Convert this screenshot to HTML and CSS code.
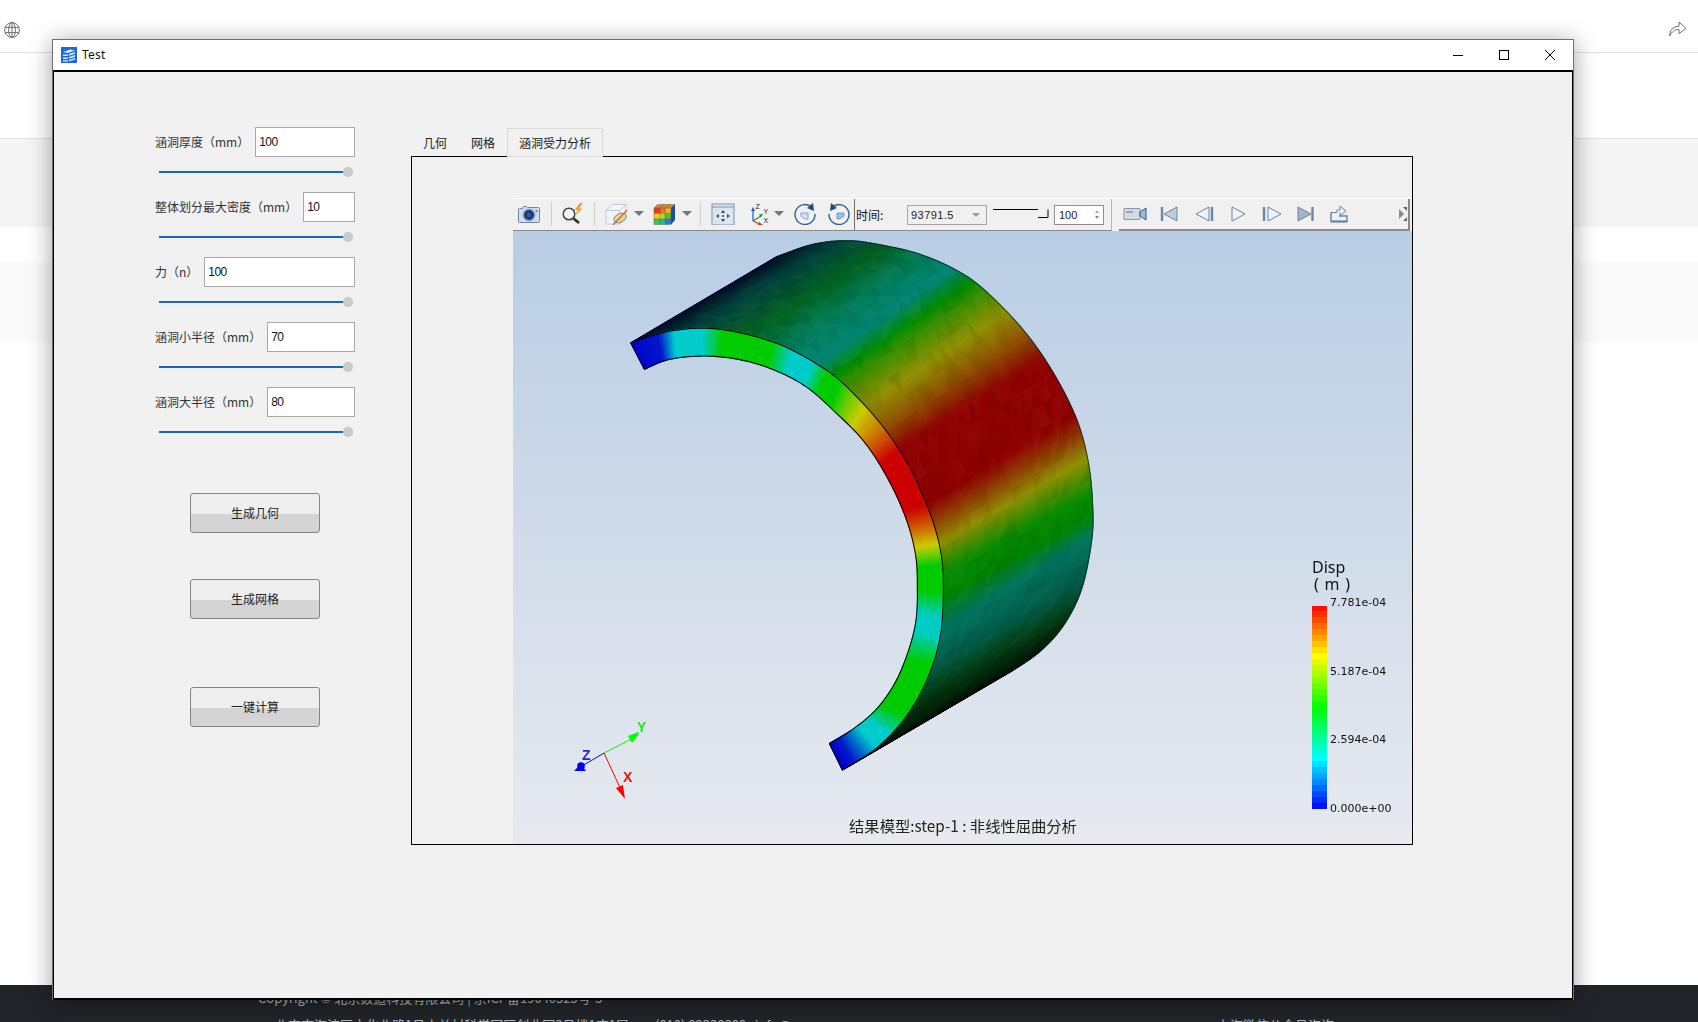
FILE: index.html
```html
<!DOCTYPE html>
<html lang="zh">
<head>
<meta charset="utf-8">
<title>Test</title>
<link rel="stylesheet" href="styles.css">
</head>
<body>
<div class="page">
  <header class="site-head">
    <svg class="globe" viewBox="0 0 16 16" width="16" height="16"><g fill="none" stroke="#6d6d6d" stroke-width="1"><circle cx="8" cy="8" r="7.4"/><ellipse cx="8" cy="8" rx="3.4" ry="7.4"/><path d="M8 .6v14.8M1.2 5.4h13.600M1.2 10.600h13.600"/></g></svg>
    <svg class="share" viewBox="0 0 18 18" width="18" height="18"><path d="M.8 17C.6 11 4 7.400 10 7.200V3l7 6.400-7 5.200v-4.200C6 10.200 2.800 12.600.8 17Z" fill="none" stroke="#6f6f6f" stroke-width="1"/></svg>
  </header>
  <div class="band-white"></div>
  <div class="band-grey"></div>
  <div class="band-gap"></div>
  <div class="band-light"></div>
  <div class="band-fill"></div>
  <footer class="site-foot">
    <p class="foot-line">Copyright © 北京数造科技有限公司 | 京ICP备19040325号-5</p>
    <p class="foot-line foot-row">
      <span class="addr"><i class="dot"></i>北京市海淀区文化北路1号中关村科学园区创业园3号楼1座1层</span>
      <span class="tel"><i class="dot"></i>(010) 82238888 &nbsp; info@cae.com</span>
      <span class="qr">上海微信公众号咨询</span>
    </p>
  </footer>
</div>

<section class="window">
  <div class="titlebar">
    <svg class="app-icon" viewBox="0 0 16 16" width="16" height="16"><rect width="16" height="16" fill="#1769e0"/><path d="M2 5 9 2.500 14 3.500 7 6ZM2 7.500h5v1.500H2ZM8 7l6-2v1.800L8 8.800ZM2 10.500h5V12H2ZM8 10l6-2v1.800l-6 2ZM2 13.200h5v1.200H2ZM8 13l6-2v1.500l-6 2Z" fill="#dfeafc"/></svg>
    <span class="win-title">Test</span>
    <div class="win-controls">
      <span class="win-btn"><svg viewBox="0 0 12 12" width="12" height="12"><path d="M1 6.500h10" stroke="#000"/></svg></span>
      <span class="win-btn"><svg viewBox="0 0 12 12" width="12" height="12"><rect x="1.500" y="1.500" width="9" height="9" fill="none" stroke="#000"/></svg></span>
      <span class="win-btn"><svg viewBox="0 0 12 12" width="12" height="12"><path d="M1 1l10 10M11 1 1 11" stroke="#000" fill="none"/></svg></span>
    </div>
  </div>
  <div class="client">
    <form class="params">
      <div class="param"><label class="param-label">涵洞厚度（mm）</label><div class="field">100</div></div>
      <div class="slider"><span class="track"></span><span class="thumb"></span></div>
      <div class="param"><label class="param-label">整体划分最大密度（mm）</label><div class="field">10</div></div>
      <div class="slider"><span class="track"></span><span class="thumb"></span></div>
      <div class="param"><label class="param-label">力（n）</label><div class="field">100</div></div>
      <div class="slider"><span class="track"></span><span class="thumb"></span></div>
      <div class="param"><label class="param-label">涵洞小半径（mm）</label><div class="field">70</div></div>
      <div class="slider"><span class="track"></span><span class="thumb"></span></div>
      <div class="param"><label class="param-label">涵洞大半径（mm）</label><div class="field">80</div></div>
      <div class="slider"><span class="track"></span><span class="thumb"></span></div>
      <button type="button" class="action action-first">生成几何</button>
      <button type="button" class="action">生成网格</button>
      <button type="button" class="action action-last">一键计算</button>
    </form>

    <div class="workspace">
      <nav class="tabs">
        <span class="tab">几何</span>
        <span class="tab">网格</span>
        <span class="tab tab-active">涵洞受力分析</span>
      </nav>
      <div class="tab-panel">
        <div class="toolbar">
          <div class="tool-left">
            <svg class="ico ml4" viewBox="0 0 24 22" width="24" height="22"><path d="M2.500 5.500h3l1-2h3l1 1h11a1 1 0 0 1 1 1v13a1 1 0 0 1-1 1h-19a1 1 0 0 1-1-1V6.500a1 1 0 0 1 1-1Z" fill="#cfdcec" stroke="#6f88aa"/><circle cx="12" cy="12" r="6.500" fill="#8fa8c8"/><circle cx="12" cy="12" r="5" fill="#1c3a78"/><circle cx="12" cy="12" r="2.200" fill="#2f5aa8"/><circle cx="19.500" cy="8" r="1" fill="#5d7698"/></svg>
            <i class="sep ml10"></i>
            <svg class="ico ml9" viewBox="0 0 24 22" width="24" height="22"><circle cx="8" cy="11" r="5.800" fill="#f2f4f7" stroke="#444" stroke-width="1.500"/><path d="M12.500 15.500l5.500 4.500" stroke="#333" stroke-width="2.800"/><path d="M19 0l-5.500 7h3.500l-3.500 6 8-7.500h-3.500l4-5.500Z" fill="#ee9f2c"/></svg>
            <i class="sep ml9"></i>
            <svg class="ico ml10" viewBox="0 0 24 22" width="24" height="22"><path d="M1 7.500 7 1.500h14v13l-6 6.500H1Z" fill="#f3f5f8" stroke="#c3cbd8"/><path d="M1 7.500h14v13.500M15 7.500l6-6" fill="none" stroke="#c3cbd8"/><ellipse cx="15" cy="15" rx="6.500" ry="4.200" fill="#efd98a" stroke="#7e8ea5" transform="rotate(-25 15 15)"/><path d="M8 22 22 7" stroke="#e0502e" stroke-width="1.200"/></svg>
            <i class="caret ml5"></i>
            <svg class="ico ml9" viewBox="0 0 24 22" width="24" height="22"><path d="M1 5h6v5.500H1Z" fill="#e33a20"/><path d="M7 5h5v5.500H7Z" fill="#ef7020"/><path d="M12 5h6v5.500h-6Z" fill="#e8b020"/><path d="M1 10.500h6V16H1Z" fill="#f0c820"/><path d="M7 10.500h5V16H7Z" fill="#c0d820"/><path d="M12 10.500h6V16h-6Z" fill="#50c040"/><path d="M1 16h6v5.500H1Z" fill="#40c060"/><path d="M7 16h5v5.500H7Z" fill="#20b8b0"/><path d="M12 16h6v5.500h-6Z" fill="#2a80d0"/><path d="M1 5l4-4h17l-4 4Z" fill="#c58a50"/><path d="M18 5l4-4v16l-4 4.500Z" fill="#1a4ea8"/><path d="M1 5h17v16.500H1ZM7 5v16.500M12 5v16.500M1 10.500h17M1 16h17M5 1 1 5M11 1 7 5M17 1l-5 4M18 5l4-4" fill="none" stroke="#55604a" stroke-width=".45"/></svg>
            <i class="caret ml5"></i>
            <i class="sep ml8"></i>
            <svg class="ico ml10" viewBox="0 0 24 22" width="24" height="22"><rect x="1" y="1" width="22" height="21" fill="#dde4ee" stroke="#7f93b0"/><path d="M1 4h22" stroke="#7f93b0"/><path d="M12 7l-2 3h4ZM12 19l-2-3h4ZM5 13l3-2v4ZM19 13l-3-2v4Z" fill="#304a70"/><circle cx="12" cy="13" r="1" fill="#304a70"/></svg>
            <svg class="ico ml13" viewBox="0 0 24 22" width="24" height="22"><path d="M5 18V7" stroke="#2858b8" stroke-width="1.200"/><path d="M5 4 3 8h4Z" fill="#2858b8"/><path d="M5 18l8-5" stroke="#209040" stroke-width="1.200"/><path d="M15 11l-4 .5 2 3Z" fill="#209040"/><path d="M5 18l7 3" stroke="#e03020" stroke-width="1.200"/><path d="M15 22l-4-3-1 3Z" fill="#e03020"/><text x="7.500" y="6" class="axis-mini">Z</text><text x="15.500" y="11" class="axis-mini">Y</text><text x="15.500" y="20" class="axis-mini">X</text></svg>
            <i class="caret ml2"></i>
            <svg class="ico ml9" viewBox="0 0 24 22" width="24" height="22"><path d="M18 3.500A10 10 0 1 0 22 11" fill="none" stroke="#2f6090" stroke-width="1.400"/><path d="M20 0l1 8-7-3Z" fill="#1e4a7e"/><path d="M8 10h7v6h-3l-4-3Z" fill="#cfe2f6" stroke="#5b8ab8" stroke-width=".7"/></svg>
            <svg class="ico ml10" viewBox="0 0 24 22" width="24" height="22"><path d="M6 3.500A10 10 0 1 1 2 11" fill="none" stroke="#2f6090" stroke-width="1.400"/><path d="M4 0 3 8l7-3Z" fill="#1e4a7e"/><path d="M10 10h7v3l-4 3h-3Z" fill="#8fc2ee" stroke="#5b8ab8" stroke-width=".7"/></svg>
          </div>
          <div class="tool-time">
            <span class="time-label">时间:</span>
            <div class="combo"><span>93791.5</span><i class="caret caret-sm"></i></div>
            <svg class="time-slider" viewBox="0 0 56 10" width="56" height="10"><path d="M0 .5h45M45 8.500h10V.5" fill="none" stroke="#000"/></svg>
            <div class="spin"><span>100</span><span class="spin-arrows"><i class="up"></i><i class="down"></i></span></div>
          </div>
          <div class="tool-play">
            <svg class="ico" viewBox="0 0 24 22" width="24" height="22"><path d="M1 5.500h16v11H1Z" fill="#d5d9e0" stroke="#8a97ab"/><path d="M3 8h7v2H3Z" fill="#9aa6b8"/><path d="M17 9l6-4v12l-6-4Z" fill="#a0bcdc" stroke="#31557f"/></svg>
            <svg class="ico ml10" viewBox="0 0 24 22" width="24" height="22"><path d="M5 4v14" stroke="#6d84a8" stroke-width="2.400"/><path d="M20 4 7 11l13 7Z" fill="#c3cbd9" stroke="#6d84a8"/></svg>
            <svg class="ico ml11" viewBox="0 0 24 22" width="24" height="22"><path d="M17 4 4 11l13 7Z" fill="#eef1f6" stroke="#6d84a8"/><path d="M20 4v14" stroke="#6d84a8" stroke-width="2.400"/></svg>
            <svg class="ico ml10" viewBox="0 0 24 22" width="24" height="22"><path d="M6 4l13 7-13 7Z" fill="#f1f3f7" stroke="#6d84a8"/></svg>
            <svg class="ico ml10" viewBox="0 0 24 22" width="24" height="22"><path d="M4 4v14" stroke="#6d84a8" stroke-width="2.400"/><path d="M8 4l13 7-13 7Z" fill="#eef1f6" stroke="#6d84a8"/></svg>
            <svg class="ico ml9" viewBox="0 0 24 22" width="24" height="22"><path d="M5 4l13 7-13 7Z" fill="#a7b3c6" stroke="#6d84a8"/><path d="M19.500 4v14" stroke="#6d84a8" stroke-width="2.400"/></svg>
            <svg class="ico ml10" viewBox="0 0 24 22" width="24" height="22"><path d="M4 9.500v9h16V13h-8" fill="none" stroke="#6d84a8" stroke-width="1.500"/><path d="M4 18.500h16" stroke="#6d84a8" stroke-width="2"/><path d="M4 9.500h6V7h3V3l6 5-6 5V9.500" fill="#eef2f8" stroke="#6d84a8"/></svg>
            <svg class="handle" viewBox="0 0 8 14" width="8" height="14"><path d="M0 2l5 5-5 5Z" fill="#8a8a8a"/><path d="M4 0h4v4ZM4 14h4v-4Z" fill="#666"/></svg>
          </div>
        </div>
        <div class="viewport">
          <canvas id="model" class="model" width="899" height="613"></canvas>
          <svg class="triad" viewBox="0 0 80 90" width="80" height="90">
            <path d="M39 22 74 4" stroke="#00ff00"/>
            <path d="M73 1 63 5l4 7 7-10Z" fill="#00ff00"/>
            <path d="M39 22 17 35" stroke="#0000ff"/>
            <circle cx="16" cy="35" r="3.800" fill="#0000ff"/><path d="M9 40h12l-5-7Z" fill="#0000ff"/>
            <path d="M39 22 57 61" stroke="#ff0000"/>
            <path d="M60 68 51 57l7-3Z" fill="#ff0000"/>
            <text x="72" y="1" class="axis-label axis-y">Y</text>
            <text x="17" y="29" class="axis-label axis-z">Z</text>
            <text x="58" y="51" class="axis-label axis-x">X</text>
          </svg>
          <div class="legend">
            <div class="legend-title">Disp<span class="legend-unit">( m )</span></div>
            <div class="legend-scale">
              <canvas id="scale" class="scale-bar" width="15" height="203"></canvas>
              <div class="scale-ticks"><span>7.781e-04</span><span>5.187e-04</span><span>2.594e-04</span><span>0.000e+00</span></div>
            </div>
          </div>
          <div class="caption">结果模型:step-1 : 非线性屈曲分析</div>
        </div>
      </div>
    </div>
  </div>
</section>
<script src="app.js"></script>
</body>
</html>
```
FILE: styles.css
```css
* { box-sizing: border-box; }
html, body { margin: 0; height: 100%; }
body {
  width: 1698px; height: 1022px; overflow: hidden; background: #fff;
  font-family: "Noto Sans CJK SC", "Noto Sans", sans-serif; font-size: 12px; color: #222;
}
.page { height: 1022px; display: flex; flex-direction: column; }
.site-head { height: 53px; flex: none; border-bottom: 1px solid #e0e0e0; display: flex; justify-content: space-between; align-items: center; padding: 7px 11px 0 4px; }
.share { margin-top: -3px; }
.band-white { height: 86px; flex: none; border-bottom: 1px solid #e0e0e0; }
.band-grey { height: 88px; flex: none; background: #f5f5f5; }
.band-gap { height: 35px; flex: none; }
.band-light { height: 80px; flex: none; background: #fafafa; }
.band-fill { flex: 1; }
.site-foot { height: 37px; flex: none; background: #212529; color: #adb5bd; padding: 4px 0 0 258px; font-size: 13px; line-height: 18px; overflow: hidden; }
.foot-line { margin: 0 0 9px; white-space: nowrap; }
.foot-row { display: flex; }
.addr { width: 380px; }
.tel { width: 579px; }
.dot { display: inline-block; width: 6px; height: 6px; border-radius: 50%; background: #0d6efd; margin-right: 11px; }

/* the application window floats over the web page */
.window { position: absolute; left: 52px; top: 39px; width: 1522px; height: 961px; background: #fff; border: 1px solid #707070; border-bottom: 0; box-shadow: 0 3px 22px rgba(0,0,0,.38); display: flex; flex-direction: column; }
.titlebar { height: 30px; flex: none; display: flex; align-items: center; padding-left: 8px; padding-bottom: 1px; }
.app-icon { flex: none; }
.win-title { margin-left: 5px; font-family: "Noto Sans", sans-serif; font-size: 12px; letter-spacing: .25px; color: #111; }
.win-controls { margin-left: auto; display: flex; }
.win-btn { width: 46px; height: 29px; display: flex; align-items: center; justify-content: center; }
.client { flex: 1; background: #f1f1f1; border: 1px solid #000; border-top-width: 2px; border-bottom-width: 2px; display: flex; align-items: flex-start; padding-left: 101px; }

.params { width: 200px; margin-top: 55px; flex: none; display: flex; flex-direction: column; }
.param { height: 30px; display: flex; align-items: center; gap: 6px; }
.param-label { white-space: nowrap; color: #333; flex: none; padding-bottom: 2px; }
.field { flex: 1; height: 30px; background: #fff; border: 1px solid #a8a8a8; padding: 0 3px; line-height: 28px; font-family: "Liberation Sans", sans-serif; letter-spacing: -.6px; color: #111; }
.slider { height: 30px; margin-bottom: 5px; padding-left: 4px; display: flex; align-items: center; }
.track { width: 184px; height: 2px; background: #1467bd; }
.thumb { width: 10px; height: 10px; border-radius: 50%; background: #cbcbcb; border: 1px dotted #bdbdbd; }
.action { width: 130px; height: 40px; margin: 46px 0 0 35px; padding: 0 0 2px; border: 1px solid #858585; border-radius: 3px; background: linear-gradient(#eeeeee 52%, #d4d4d4 52%); font: inherit; color: #222; }
.action-first { margin-top: 41px; }
.action-last { margin-top: 68px; }

.workspace { width: 1002px; margin-left: 56px; margin-top: 56px; flex: none; }
.tabs { height: 28px; display: flex; position: relative; z-index: 1; }
.tab { height: 28px; padding: 0 12px; line-height: 29px; color: #222; }
.tab-active { background: #f1f1f1; border: 1px solid #d9d9d9; height: 29px; padding: 0 11px; line-height: 27px; }
.tab-panel { height: 689px; border: 1px solid #000; padding: 41px 0 0 101px; }

.toolbar { height: 33px; display: flex; background: #f0f0f0; border-top: 1px solid #fff; }
.tool-left { width: 342px; flex: none; display: flex; align-items: center; padding-bottom: 2px; border-right: 1px solid #707070; border-bottom: 1px solid #8a8a8a; }
.tool-time { width: 257px; flex: none; display: flex; align-items: center; border-right: 1px solid #b5b5b5; border-bottom: 1px solid #8a8a8a; }
.tool-play { flex: 1; display: flex; align-items: center; margin-left: 7px; padding: 0 0 1px 4px; border-bottom: 2px solid #8a8a8a; border-right: 2px solid #8a8a8a; margin-right: 2px; }
.ico { flex: none; display: block; }
.sep { width: 1px; height: 24px; background: #cfcfcf; flex: none; }
.ml2 { margin-left: 2px; } .ml4 { margin-left: 4px; } .ml5 { margin-left: 5px; } .ml8 { margin-left: 8px; }
.ml9 { margin-left: 9px; } .ml10 { margin-left: 10px; } .ml11 { margin-left: 11px; } .ml13 { margin-left: 13px; }
.caret { flex: none; width: 0; height: 0; border: 5px solid transparent; border-top: 5px solid #777; border-bottom: 0; }
.caret-sm { border-width: 4px; border-top-width: 4px; border-bottom: 0; border-top-color: #999; }
.time-label { width: 52px; padding-left: 1px; color: #111; flex: none; }
.combo { width: 80px; height: 20px; border: 1px solid #a5a5a5; display: flex; align-items: center; justify-content: space-between; padding: 0 6px 0 3px; flex: none; font-family: "Liberation Sans", sans-serif; font-size: 11px; letter-spacing: .45px; }
.time-slider { margin-left: 6px; flex: none; margin-bottom: 1px; }
.spin { width: 50px; height: 20px; margin-left: 5px; background: #fff; border: 1px solid #8f8f8f; display: flex; align-items: center; justify-content: space-between; padding: 0 4px; flex: none; font-family: "Liberation Sans", sans-serif; font-size: 11px; }
.spin-arrows { display: flex; flex-direction: column; gap: 3px; }
.spin-arrows i { width: 0; height: 0; border: 2.5px solid transparent; }
.spin-arrows .up { border-bottom: 3px solid #aaa; border-top: 0; }
.spin-arrows .down { border-top: 3px solid #888; border-bottom: 0; }
.handle { margin-left: auto; margin-right: 1px; flex: none; }
.axis-mini { font: 7px "Liberation Sans", sans-serif; fill: #222; }

.viewport { position: relative; height: 613px; background: linear-gradient(#b9cde4, #e7eaef); overflow: hidden; }
.model { position: absolute; left: 0; top: 0; }
.triad { position: absolute; left: 52px; top: 500px; overflow: visible; }
.axis-label { font: bold 14px "Liberation Sans", sans-serif; }
.axis-y { fill: #22e622; } .axis-z { fill: #2222e0; } .axis-x { fill: #ee1010; }
.legend { position: absolute; left: 799px; top: 328px; color: #111; }
.legend-title { font-family: "Noto Sans", sans-serif; font-size: 16px; line-height: 17px; white-space: nowrap; }
.legend-unit { display: block; margin-left: 2px; letter-spacing: .8px; }
.legend-scale { display: flex; align-items: flex-start; margin-top: 13px; gap: 3px; }
.scale-bar { display: block; flex: none; width: 15px; height: 203px; }
.scale-ticks { height: 220px; margin-top: -10px; display: flex; flex-direction: column; justify-content: space-between; font-family: "DejaVu Sans", sans-serif; font-size: 11px; line-height: 14px; white-space: nowrap; }
.caption { position: absolute; left: 0; right: 0; bottom: 9px; padding-left: 1px; text-align: center; font-size: 15.3px; line-height: 20px; color: #222; }
```
FILE: app.js
```js
// Draws the displacement contour plot and its colour scale onto canvases.
(function () {
  var F = [[92,316],[200,285],[320,275],[440,292],[550,325],[650,375],[730,430],[840,540],[920,650],[985,780],[1020,890],[1030,990],[1022,1130],[985,1250],[920,1360],[830,1450],[727,1512]];
  var I = [[133,390],[210,362],[320,353],[430,365],[530,395],[620,440],[700,505],[790,590],[860,690],[915,800],[945,900],[952,990],[945,1110],[900,1240],[840,1330],[770,1390],[688,1438]];
  var B = [[530,75],[640,40],[750,30],[860,45],[960,68],[1060,108],[1150,165],[1270,280],[1360,400],[1430,530],[1465,650],[1478,770],[1475,870],[1445,1005],[1392,1105],[1320,1180],[1235,1235]];
  // contour value along the front ring
  var VAL = [[0,0],[0.8,0.03],[1.2,0.25],[1.9,0.25],[2.4,0.5],[3.7,0.5],[4.3,0.25],[4.9,0.25],[5.4,0.5],[5.9,0.5],[6.6,0.75],[7.3,0.9],[7.7,1],[8.9,1],[9.4,0.88],[9.9,0.75],[10.5,0.5],[11.2,0.5],[11.7,0.26],[12.1,0.26],[12.7,0.5],[14,0.5],[14.6,0.25],[15,0.25],[15.6,0.03],[16,0]];
  // contour value and lighting on the curved outer surface
  var SVAL = [[0,0.1],[2,0.3],[3,0.42],[4,0.33],[5,0.28],[5.7,0.5],[6.6,0.75],[7.3,0.9],[7.7,1],[8.9,1],[9.4,0.88],[9.9,0.75],[10.7,0.52],[11.3,0.5],[11.9,0.3],[12.8,0.3],[13.6,0.42],[16,0.45]];
  var SHADE = [[0,0.1],[1,0.18],[2,0.28],[3,0.38],[4,0.48],[5,0.52],[6,0.56],[10,0.56],[11,0.54],[12,0.45],[13,0.33],[14,0.18],[15,0.09],[16,0.04]];

  function interp(tbl, t) {
    for (var i = 1; i < tbl.length; i++) {
      if (t <= tbl[i][0]) {
        var a = tbl[i - 1], b = tbl[i], k = (t - a[0]) / (b[0] - a[0]);
        return a[1] + (b[1] - a[1]) * k;
      }
    }
    return tbl[tbl.length - 1][1];
  }
  function jet(v) {
    var s = [[0,0,255],[0,255,255],[0,255,0],[255,255,0],[255,0,0]];
    var p = Math.min(3.999, Math.max(0, v * 4)), n = Math.floor(p), k = p - n;
    return [0,1,2].map(function (c) { return s[n][c] + (s[n + 1][c] - s[n][c]) * k; });
  }
  function css(c, m) {
    return 'rgb(' + Math.round(c[0] * m) + ',' + Math.round(c[1] * m) + ',' + Math.round(c[2] * m) + ')';
  }
  function spline(p, t) {
    var n = p.length - 1, i = Math.min(n - 1, Math.floor(t)), k = t - i;
    var a = p[Math.max(0, i - 1)], b = p[i], c = p[i + 1], d = p[Math.min(n, i + 2)];
    return [0,1].map(function (q) {
      return 0.5 * (2 * b[q] + (c[q] - a[q]) * k + (2 * a[q] - 5 * b[q] + 4 * c[q] - d[q]) * k * k + (3 * b[q] - a[q] - 3 * c[q] + d[q]) * k * k * k);
    });
  }
  function quad(ctx, a, b, c, d, col) {
    ctx.fillStyle = col; ctx.strokeStyle = col; ctx.lineWidth = 3; ctx.lineJoin = 'bevel';
    ctx.beginPath(); ctx.moveTo(a[0], a[1]); ctx.lineTo(b[0], b[1]); ctx.lineTo(c[0], c[1]); ctx.lineTo(d[0], d[1]); ctx.closePath();
    ctx.fill(); ctx.stroke();
  }
  function curve(ctx, p, col, w) {
    ctx.strokeStyle = col; ctx.lineWidth = w; ctx.beginPath();
    for (var t = 0; t <= 16.001; t += 0.1) { var q = spline(p, Math.min(16, t)); ctx.lineTo(q[0], q[1]); }
    ctx.stroke();
  }

  var ctx = document.getElementById('model').getContext('2d');
  ctx.setTransform(1 / 3, 0, 0, 1 / 2.8, 87, -1);
  var step = 1 / 16, t;
  for (t = 0; t < 16; t += step) {
    var t2 = Math.min(16, t + step), m = t + step / 2;
    quad(ctx, spline(F, t), spline(B, t), spline(B, t2), spline(F, t2), css(jet(interp(SVAL, m)), interp(SHADE, m)));
  }
  // mesh facets
  var seed = 7;
  function rnd() { seed = (seed * 16807) % 2147483647; return seed / 2147483647; }
  function mix(a, b, s) { return [a[0] + (b[0] - a[0]) * s, a[1] + (b[1] - a[1]) * s]; }
  function tri(a, b, c) {
    var g = rnd();
    ctx.fillStyle = g < 0.5 ? 'rgba(0,0,0,' + (g * 0.12) + ')' : 'rgba(255,255,255,' + ((g - 0.5) * 0.05) + ')';
    ctx.beginPath(); ctx.moveTo(a[0], a[1]); ctx.lineTo(b[0], b[1]); ctx.lineTo(c[0], c[1]); ctx.closePath(); ctx.fill();
  }
  for (t = 0; t < 16; t += 0.4) {
    for (var j = 0; j < 14; j++) {
      var f1 = spline(F, t), f2 = spline(F, Math.min(16, t + 0.4)), b1 = spline(B, t), b2 = spline(B, Math.min(16, t + 0.4));
      var a = mix(f1, b1, j / 14), b = mix(f1, b1, (j + 1) / 14), c = mix(f2, b2, (j + 1) / 14), d = mix(f2, b2, j / 14);
      tri(a, b, d); tri(b, c, d);
    }
  }
  // front ring
  for (t = 0; t < 16; t += step) {
    var e = Math.min(16, t + step);
    quad(ctx, spline(I, t), spline(F, t), spline(F, e), spline(I, e), css(jet(interp(VAL, t + step / 2)), 0.8));
  }
  curve(ctx, F, '#000', 3);
  curve(ctx, I, '#000', 3);
  curve(ctx, B, 'rgba(0,40,50,.75)', 3);
  ctx.strokeStyle = '#000'; ctx.lineWidth = 3; ctx.beginPath();
  ctx.moveTo(F[0][0], F[0][1]); ctx.lineTo(I[0][0], I[0][1]);
  ctx.moveTo(F[16][0], F[16][1]); ctx.lineTo(I[16][0], I[16][1]);
  ctx.stroke();
  ctx.strokeStyle = '#000050'; ctx.beginPath();
  ctx.moveTo(F[0][0], F[0][1]); ctx.lineTo(B[0][0], B[0][1]); ctx.stroke();
  ctx.strokeStyle = '#000'; ctx.beginPath();
  ctx.moveTo(F[16][0], F[16][1]); ctx.lineTo(B[16][0], B[16][1]); ctx.stroke();

  // colour scale
  var sc = document.getElementById('scale').getContext('2d');
  var bands = 34, h = 203 / bands;
  for (var n = 0; n < bands; n++) {
    sc.fillStyle = css(jet(1 - (n + 0.5) / bands), 1);
    sc.fillRect(0, Math.floor(n * h), 15, Math.ceil(h));
  }
})();
```
